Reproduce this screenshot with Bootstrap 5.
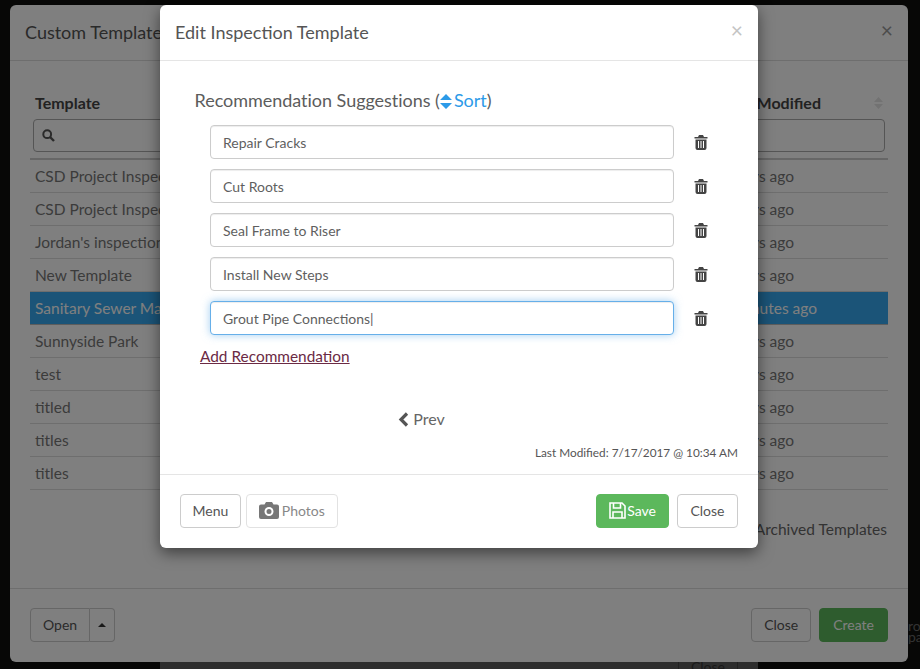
<!DOCTYPE html>
<html lang="en">
<head>
<meta charset="utf-8">
<title>Edit Inspection Template</title>
<link href="https://cdn.jsdelivr.net/npm/bootstrap@5.3.0/dist/css/bootstrap.min.css" rel="stylesheet">
<style>
html,body{height:669px;overflow:hidden}
body{background:#0e0e0c;font-family:Lato,"Liberation Sans",sans-serif;color:#555;font-size:15px;margin:0;position:relative}
.stage-bg{height:669px;padding:5px 12px 0 10px;position:relative}
.under-win{height:657px;background:#fff;border-radius:6px;display:flex;flex-direction:column;color:#555;position:relative}
.under-head{height:56px;padding:0 15px;border-bottom:1px solid #ddd;display:flex;align-items:center;justify-content:space-between;flex:none}
.under-head h5{font-size:18px;margin:0 0 2px;font-weight:400;line-height:1;color:#555}
.x-mark{color:#999;font-size:21px;line-height:1;font-weight:400;margin-bottom:6px}
.under-body{flex:1;padding:32px 20px 0 20px;position:relative}
.tpl-cols{display:flex;justify-content:space-between;align-items:center;font-weight:700;font-size:16px;padding:0 5px;height:26px;line-height:20px;margin-bottom:0;color:#444}
.tpl-cols span,.tpl-cols svg{position:relative;top:-3px}
.tpl-search{height:33px;margin:0 3px;border:1px solid #aaa;border-radius:4px;padding-left:8px;display:flex;align-items:center}
.tpl-rule{height:2px;background:#ccc;margin-top:6px}
.tpl-row{height:33px;line-height:32px;padding:0 5px;border-bottom:1px solid #ddd;display:flex;justify-content:space-between;font-size:15.5px;color:#777}
.tpl-row .when{margin-right:89px}
.tpl-row.sel{background:#37a9f0;color:#fff;border-bottom-color:#bbb}
.tpl-row.sel .when{margin-right:66px}
.archived{position:absolute;right:21px;top:457px;font-size:15.5px;color:#666}
.under-foot{height:74px;border-top:1px solid #ddd;padding:0 20px 2px;display:flex;align-items:center;justify-content:space-between;flex:none}
.btn-lato{font-size:14px;height:34px;padding:0 12px;line-height:32px;border:1px solid #ccc;border-radius:4px;background:#fff;color:#555;font-family:inherit}
.btn-go{background:#5cb85c;border-color:#5cb85c;color:#fff}
.btn-off{color:#888;border-color:#e2e2e2;background:#fff}
.caret-cell{width:25px;padding:0;display:flex;align-items:center;justify-content:center}
.caret-up{width:0;height:0;border-left:4px solid transparent;border-right:4px solid transparent;border-bottom:4px solid #333}
.peek-strip{position:absolute;left:160px;top:640px;width:598px;height:29px;background:#5c5c5c}
.peek-close{position:absolute;left:678px;top:650px;width:60px;height:34px;border:1px solid #444;text-align:center;font-size:14px;line-height:32px;color:#333;background:#5c5c5c}
.side-text{position:absolute;left:908px;top:620px;font-size:14px;line-height:11px;color:#666;white-space:pre}
.dim-layer{position:absolute;inset:0;background:rgba(0,0,0,.5)}
.top-win{position:absolute;left:160px;top:5px;width:598px;height:543px;background:#fff;border-radius:6px;box-shadow:0 5px 15px rgba(0,0,0,.5);display:flex;flex-direction:column}
.top-head{height:56px;flex:none;padding:0 15px;border-bottom:1px solid #e5e5e5;display:flex;align-items:center;justify-content:space-between}
.top-head h5{font-size:18px;font-weight:400;margin:0 0 2px;color:#555;line-height:1}
.x-light{color:#c4c4c4;font-size:21px;line-height:1;margin-bottom:6px}
.top-body{flex:1;padding:28px 20px 0 20px;display:flex;flex-direction:column}
.rec-title{font-size:18px;line-height:22px;padding-left:14.500px;color:#5c5c5c;margin:0 0 14px;letter-spacing:-.03px}
.rec-title a{color:#2c9ae8;text-decoration:none}
.sort-tri{vertical-align:-2px;margin-right:2px}
.rec-row{display:flex;align-items:center;height:34px;margin-bottom:10px;padding-left:30px}
.rec-input{width:464px;height:34px;font-size:14px;color:#5f5f5f;border:1px solid #ccc;border-radius:4px;padding:0 12px;font-family:inherit;box-shadow:inset 0 1px 1px rgba(0,0,0,.075);background:#fff;outline:0}
.rec-input.on{border-color:#66afe9;box-shadow:inset 0 1px 1px rgba(0,0,0,.075),0 0 8px rgba(102,175,233,.6)}
.bin{margin-left:20px;display:block}
.add-link{font-size:15.400px;line-height:18px;padding-left:20px;color:#6b2a44;text-decoration:underline;margin-top:2px;align-self:flex-start}
.pager{margin-top:44px;text-align:center;font-size:16px;line-height:20px;color:#666;padding-right:75px}
.chev{vertical-align:-2px;margin-right:-1px}
.stamp{margin-top:16px;text-align:right;font-size:11.800px;line-height:16px;color:#555}
.top-foot{height:74px;flex:none;border-top:1px solid #e5e5e5;padding:0 20px 2px;display:flex;align-items:center;justify-content:space-between}
.btn-menu{padding:0 11.500px}
.btn-shut{padding:0 12.500px}
.btn-wide{padding:0 13px}
</style>
</head>
<body>
<div class="stage-bg">
  <div class="peek-strip"></div>
  <div class="peek-close">Close</div>
  <div class="side-text">ro
pa</div>
  <div class="under-win">
    <div class="under-head"><h5>Custom Templates</h5><span class="x-mark">&times;</span></div>
    <div class="under-body">
      <div class="tpl-cols"><span>Template</span><span style="margin-left:auto;margin-right:53px">Modified</span><svg width="9" height="12" viewBox="0 0 9 12"><path fill="#e4e4e4" d="M4.500 0L9 5H0zM4.500 12L0 7h9z"/></svg></div>
      <div class="tpl-search"><svg width="13" height="13" viewBox="0 0 13 13"><circle cx="5.200" cy="5.200" r="3.900" fill="none" stroke="#555" stroke-width="2"/><path d="M8 8l4 4" stroke="#555" stroke-width="2.400"/></svg></div>
      <div class="tpl-rule"></div>
      <div class="tpl-row"><span>CSD Project Inspection</span><span class="when">hours ago</span></div>
      <div class="tpl-row"><span>CSD Project Inspection</span><span class="when">hours ago</span></div>
      <div class="tpl-row"><span>Jordan's inspection</span><span class="when">hours ago</span></div>
      <div class="tpl-row"><span>New Template</span><span class="when">hours ago</span></div>
      <div class="tpl-row sel"><span>Sanitary Sewer Manhole</span><span class="when">minutes ago</span></div>
      <div class="tpl-row"><span>Sunnyside Park</span><span class="when">hours ago</span></div>
      <div class="tpl-row"><span>test</span><span class="when">hours ago</span></div>
      <div class="tpl-row"><span>titled</span><span class="when">hours ago</span></div>
      <div class="tpl-row"><span>titles</span><span class="when">hours ago</span></div>
      <div class="tpl-row"><span>titles</span><span class="when">hours ago</span></div>
      <div class="archived">Archived Templates</div>
    </div>
    <div class="under-foot">
      <div class="d-flex"><span class="btn-lato" style="border-radius:4px 0 0 4px">Open</span><span class="btn-lato caret-cell" style="border-radius:0 4px 4px 0;border-left:0"><i class="caret-up"></i></span></div>
      <div class="d-flex gap-2"><span class="btn-lato">Close</span><span class="btn-lato btn-go btn-wide">Create</span></div>
    </div>
  </div>
</div>
<div class="dim-layer"></div>
<div class="top-win">
  <div class="top-head"><h5>Edit Inspection Template</h5><span class="x-light">&times;</span></div>
  <div class="top-body">
    <p class="rec-title">Recommendation Suggestions (<a href="#"><svg width="12" height="15" viewBox="0 0 12 15" class="sort-tri"><path fill="#2c9ae8" d="M6 0l6 6H0zM6 15L0 9h12z"/></svg>Sort</a>)</p>
    <div class="rec-row"><input class="rec-input" value="Repair Cracks"><svg class="bin" width="14" height="15" viewBox="0 0 14 15"><path fill="#444" d="M5 0h4l1 2h3.500v1.500H.5V2H4zM1.500 4.500h11V13a2 2 0 0 1-2 2h-7a2 2 0 0 1-2-2zM4 6v7h1V6zm2.500 0v7h1V6zM9 6v7h1V6z" fill-rule="evenodd"/></svg></div>
    <div class="rec-row"><input class="rec-input" value="Cut Roots"><svg class="bin" width="14" height="15" viewBox="0 0 14 15"><path fill="#444" d="M5 0h4l1 2h3.500v1.500H.5V2H4zM1.500 4.500h11V13a2 2 0 0 1-2 2h-7a2 2 0 0 1-2-2zM4 6v7h1V6zm2.500 0v7h1V6zM9 6v7h1V6z" fill-rule="evenodd"/></svg></div>
    <div class="rec-row"><input class="rec-input" value="Seal Frame to Riser"><svg class="bin" width="14" height="15" viewBox="0 0 14 15"><path fill="#444" d="M5 0h4l1 2h3.500v1.500H.5V2H4zM1.500 4.500h11V13a2 2 0 0 1-2 2h-7a2 2 0 0 1-2-2zM4 6v7h1V6zm2.500 0v7h1V6zM9 6v7h1V6z" fill-rule="evenodd"/></svg></div>
    <div class="rec-row"><input class="rec-input" value="Install New Steps"><svg class="bin" width="14" height="15" viewBox="0 0 14 15"><path fill="#444" d="M5 0h4l1 2h3.500v1.500H.5V2H4zM1.500 4.500h11V13a2 2 0 0 1-2 2h-7a2 2 0 0 1-2-2zM4 6v7h1V6zm2.500 0v7h1V6zM9 6v7h1V6z" fill-rule="evenodd"/></svg></div>
    <div class="rec-row"><input class="rec-input on" value="Grout Pipe Connections|"><svg class="bin" width="14" height="15" viewBox="0 0 14 15"><path fill="#444" d="M5 0h4l1 2h3.500v1.500H.5V2H4zM1.500 4.500h11V13a2 2 0 0 1-2 2h-7a2 2 0 0 1-2-2zM4 6v7h1V6zm2.500 0v7h1V6zM9 6v7h1V6z" fill-rule="evenodd"/></svg></div>
    <a class="add-link" href="#">Add Recommendation</a>
    <div class="pager"><svg width="12" height="15" viewBox="0 0 12 15" class="chev"><path d="M9 1.500L3 7.500l6 6" fill="none" stroke="#555" stroke-width="3.200"/></svg> Prev</div>
    <div class="stamp">Last Modified: 7/17/2017 @ 10:34 AM</div>
  </div>
  <div class="top-foot">
    <div class="d-flex" style="gap:5px">
      <span class="btn-lato btn-menu">Menu</span>
      <span class="btn-lato btn-off d-flex align-items-center" style="gap:3px"><svg width="20" height="17" viewBox="0 0 20 17"><path fill="#777" fill-rule="evenodd" d="M7 0h6l1.500 2.500H18a2 2 0 0 1 2 2V15a2 2 0 0 1-2 2H2a2 2 0 0 1-2-2V4.500a2 2 0 0 1 2-2h3.500zM10 5a4.500 4.500 0 1 0 0 9 4.500 4.500 0 0 0 0-9zm0 2a2.500 2.500 0 1 1 0 5 2.500 2.500 0 0 1 0-5z"/></svg>Photos</span>
    </div>
    <div class="d-flex" style="gap:8px">
      <span class="btn-lato btn-go d-flex align-items-center" style="gap:1px"><svg width="17" height="17" viewBox="0 0 17 17"><path fill="none" stroke="#fff" stroke-width="1.600" d="M1 1h12l3 3v12H1zM4.500 1v5h7V1M4 16v-6h9v6"/></svg>Save</span>
      <span class="btn-lato btn-shut">Close</span>
    </div>
  </div>
</div>
<script src="https://cdn.jsdelivr.net/npm/bootstrap@5.3.0/dist/js/bootstrap.bundle.min.js"></script>
</body>
</html>
